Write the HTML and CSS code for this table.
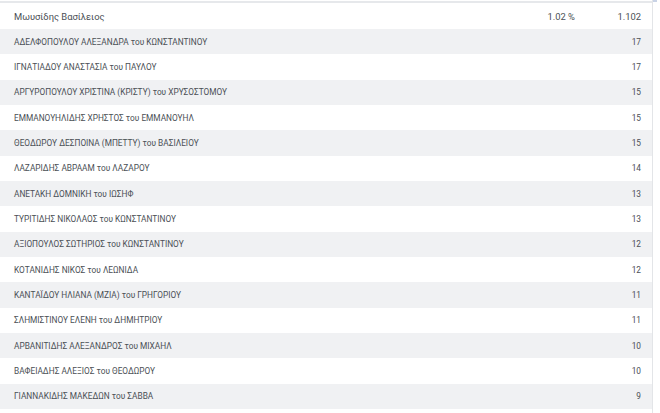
FILE: index.html
```html
<!DOCTYPE html>
<html>
<head>
<meta charset="utf-8">
<link rel="stylesheet" href="styles.css">
</head>
<body>
<div class="frame">
  <div class="table">
    <div class="row head">
      <span class="name">Μωυσίδης Βασίλειος</span>
      <span class="pct">1.02 %</span>
      <span class="num">1.102</span>
    </div>
    <div class="row alt"><span class="name">ΑΔΕΛΦΟΠΟΥΛΟΥ ΑΛΕΞΑΝΔΡΑ του ΚΩΝΣΤΑΝΤΙΝΟΥ</span><span class="num">17</span></div>
    <div class="row"><span class="name">ΙΓΝΑΤΙΑΔΟΥ ΑΝΑΣΤΑΣΙΑ του ΠΑΥΛΟΥ</span><span class="num">17</span></div>
    <div class="row alt"><span class="name">ΑΡΓΥΡΟΠΟΥΛΟΥ ΧΡΙΣΤΙΝΑ (ΚΡΙΣΤΥ) του ΧΡΥΣΟΣΤΟΜΟΥ</span><span class="num">15</span></div>
    <div class="row"><span class="name">ΕΜΜΑΝΟΥΗΛΙΔΗΣ ΧΡΗΣΤΟΣ του ΕΜΜΑΝΟΥΗΛ</span><span class="num">15</span></div>
    <div class="row alt"><span class="name">ΘΕΟΔΩΡΟΥ ΔΕΣΠΟΙΝΑ (ΜΠΕΤΤΥ) του ΒΑΣΙΛΕΙΟΥ</span><span class="num">15</span></div>
    <div class="row"><span class="name">ΛΑΖΑΡΙΔΗΣ ΑΒΡΑΑΜ του ΛΑΖΑΡΟΥ</span><span class="num">14</span></div>
    <div class="row alt"><span class="name">ΑΝΕΤΑΚΗ ΔΟΜΝΙΚΗ του ΙΩΣΗΦ</span><span class="num">13</span></div>
    <div class="row"><span class="name">ΤΥΡΙΤΙΔΗΣ ΝΙΚΟΛΑΟΣ του ΚΩΝΣΤΑΝΤΙΝΟΥ</span><span class="num">13</span></div>
    <div class="row alt"><span class="name">ΑΞΙΟΠΟΥΛΟΣ ΣΩΤΗΡΙΟΣ του ΚΩΝΣΤΑΝΤΙΝΟΥ</span><span class="num">12</span></div>
    <div class="row"><span class="name">ΚΟΤΑΝΙΔΗΣ ΝΙΚΟΣ του ΛΕΩΝΙΔΑ</span><span class="num">12</span></div>
    <div class="row alt"><span class="name">ΚΑΝΤΑΪΔΟΥ ΗΛΙΑΝΑ (ΜΖΙΑ) του ΓΡΗΓΟΡΙΟΥ</span><span class="num">11</span></div>
    <div class="row"><span class="name">ΣΛΗΜΙΣΤΙΝΟΥ ΕΛΕΝΗ του ΔΗΜΗΤΡΙΟΥ</span><span class="num">11</span></div>
    <div class="row alt"><span class="name">ΑΡΒΑΝΙΤΙΔΗΣ ΑΛΕΞΑΝΔΡΟΣ του ΜΙΧΑΗΛ</span><span class="num">10</span></div>
    <div class="row"><span class="name">ΒΑΦΕΙΑΔΗΣ ΑΛΕΞΙΟΣ του ΘΕΟΔΩΡΟΥ</span><span class="num">10</span></div>
    <div class="row alt"><span class="name">ΓΙΑΝΝΑΚΙΔΗΣ ΜΑΚΕΔΩΝ του ΣΑΒΒΑ</span><span class="num">9</span></div>
  </div>
  <div class="edge"><div class="thumb"></div></div>
</div>
</body>
</html>
```
FILE: styles.css
```css
html, body {
  margin: 0;
  padding: 0;
  background: #ffffff;
}
body {
  font-family: Roboto, "Noto Sans", sans-serif;
  color: #4a4f55;
  width: 660px;
  height: 413px;
  overflow: hidden;
}
.frame {
  display: flex;
  height: 413px;
}
.table {
  width: 652px;
  border-top: 2px solid #e6e8eb;
  margin-top: 1px;
  display: flex;
  flex-direction: column;
}
.edge {
  width: 1px;
  background: #e3e5e8;
  position: relative;
}
.thumb {
  position: absolute;
  top: 0;
  left: 1px;
  width: 4px;
  height: 2px;
  background: #c9d3e6;
}
.row {
  display: flex;
  align-items: center;
  height: 25.35px;
  padding: 0 11px 0 14px;
  font-size: 8.3px;
}
.row.alt {
  background: #f0f1f3;
}
.row.head {
  height: 26px;
  font-size: 9.4px;
  padding-top: 1px;
  box-sizing: border-box;
}
.name {
  flex: 1;
}
.pct {
  width: 60px;
  text-align: right;
}
.num {
  width: 66px;
  text-align: right;
}
```
